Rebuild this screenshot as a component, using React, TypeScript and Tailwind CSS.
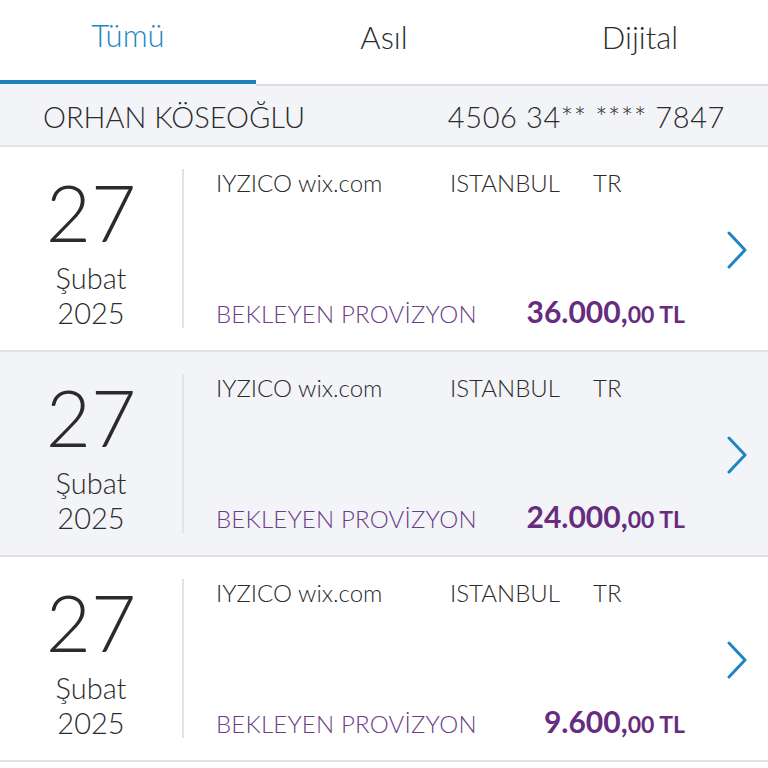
const rows = [
  { amount: "36.000", bg: "bg-white" },
  { amount: "24.000", bg: "bg-[#f3f4f8]" },
  { amount: "9.600", bg: "bg-white" },
];

function Chevron() {
  return (
    <svg width="22" height="38" viewBox="0 0 22 38" fill="none">
      <polyline points="3,2 19,19 3,36" stroke="#1f84c4" strokeWidth="3" strokeLinecap="round" strokeLinejoin="round" />
    </svg>
  );
}

function Row({ amount, bg }: { amount: string; bg: string }) {
  return (
    <div className={`${bg} h-[205px] border-b-2 border-[#dfe1e6] flex items-stretch`}>
      <div className="w-[182px] flex flex-col items-center pt-[34px] text-[#2b2b2b]">
        <div className="text-[78px] leading-[62px] font-light">27</div>
        <div className="text-[29px] leading-[35px] font-light mt-[17px]">Şubat</div>
        <div className="text-[29px] leading-[35px] font-light">2025</div>
      </div>
      <div className="w-[2px] bg-[#e2e3e6] my-[22px]" />
      <div className="flex-1 flex flex-col justify-between pl-[32px] pt-[22px] pb-[16px]">
        <div className="flex text-[24px] leading-[28px] font-light text-[#2b2b2b]">
          <span className="w-[234px]">IYZICO wix.com</span>
          <span className="w-[143px]">ISTANBUL</span>
          <span>TR</span>
        </div>
        <div className="flex items-baseline pr-[31px]">
          <span className="text-[24px] font-light text-[#6b3d86] tracking-[0.2px]">BEKLEYEN PROVİZYON</span>
          <span className="ml-auto font-bold text-[#672c80]">
            <span className="text-[30px]">{amount},</span>
            <span className="text-[23px]">00 TL</span>
          </span>
        </div>
      </div>
      <div className="w-[52px] flex items-center pl-[10px] pt-[2px]">
        <Chevron />
      </div>
    </div>
  );
}

export default function App() {
  return (
    <div className="w-[768px] h-[768px] overflow-hidden bg-white" style={{ fontFamily: "Lato, 'Noto Sans', sans-serif" }}>
      <div className="flex h-[84px]">
        {["Tümü", "Asıl", "Dijital"].map((t, i) => (
          <div
            key={t}
            className={`flex-1 flex items-center justify-center pb-[10px] text-[31px] font-light ${
              i === 0 ? "text-[#2187c1] border-b-4 border-[#1f7fbf]" : "text-[#2b2b2b] border-b-2 border-[#dcdde0] mb-[-2px]"
            }`}
          >
            {t}
          </div>
        ))}
      </div>
      <div className="h-[63px] bg-[#f3f4f8] flex items-center justify-between px-[43px] pt-[4px] text-[29px] font-light text-[#2b2b2b] border-b-2 border-[#e2e3e7]">
        <span>ORHAN KÖSEOĞLU</span>
        <span className="tracking-[0.6px]">4506 34** **** 7847</span>
      </div>
      {rows.map((r, i) => (
        <Row key={i} {...r} />
      ))}
    </div>
  );
}
